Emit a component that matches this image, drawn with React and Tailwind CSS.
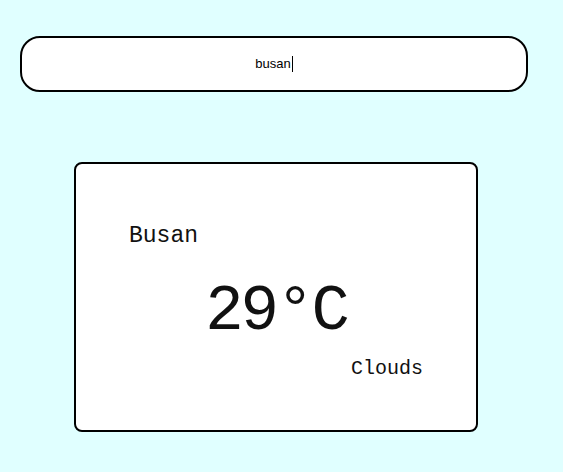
import React from 'react';

/**
 * Simple weather lookup: search box on top, result card below.
 */
export default function App() {
  const weather = { city: 'Busan', temp: 29, main: 'Clouds' };

  return (
    <div className="min-h-screen bg-[#e0ffff] px-[20px] pt-[36px]">
      <div className="flex h-[56px] w-[508px] items-center justify-center rounded-[20px] border-2 border-black bg-white font-['Liberation_Sans',Arial,sans-serif] text-[13px] text-black">
        <span>busan</span>
        <span className="ml-px h-[16px] w-px bg-black" aria-hidden />
      </div>

      <div className="ml-[54px] mt-[70px] flex h-[270px] w-[404px] flex-col rounded-lg border-2 border-black bg-white pl-[53px] pr-[53px] pt-[58px] font-['Liberation_Mono','DejaVu_Sans_Mono',monospace] text-[#111]">
        <p className="text-[23px] leading-[28px]">{weather.city}</p>
        <p className="mt-[24px] text-center text-[64px] leading-[76px] tracking-[-3px]">{weather.temp}°C</p>
        <p className="mt-[6px] text-right text-[20px] leading-[25px]">{weather.main}</p>
      </div>
    </div>
  );
}
